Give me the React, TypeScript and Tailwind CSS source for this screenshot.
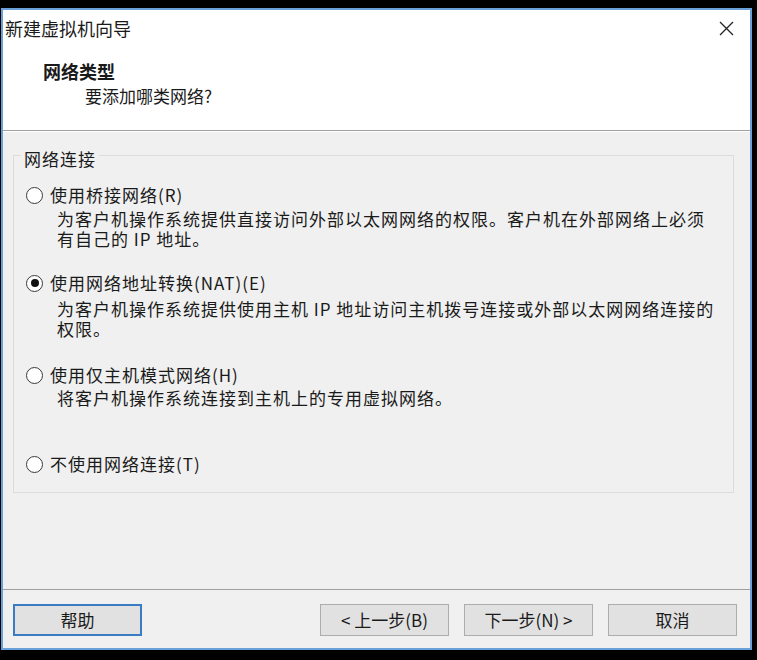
import React from "react"

const FONT = { fontFamily: '"Noto Sans CJK SC", "Noto Sans", sans-serif' }

type OptionProps = {
    label: string
    lines?: string[]
    checked?: boolean
    className?: string
    descClass?: string
}

const Radio = ({ checked }: { checked?: boolean }) => (
    <span className="w-[17px] h-[17px] rounded-full border-[1.5px] border-[#3a3a3a] bg-white flex items-center justify-center shrink-0">
        {checked && <span className="w-[8px] h-[8px] rounded-full bg-[#111]" />}
    </span>
)

const Option = ({ label, lines = [], checked, className = "", descClass = "mt-[4px]" }: OptionProps) => (
    <div className={className}>
        <div className="flex items-center h-[20px] gap-[7px]">
            <Radio checked={checked} />
            <span className="leading-[20px] tracking-[1px] whitespace-nowrap">{label}</span>
        </div>
        {lines.length > 0 && (
            <div className={`pl-[31px] ${descClass}`}>
                {lines.map((l) => (
                    <div key={l} className="leading-[20px] tracking-[1px] whitespace-nowrap">{l}</div>
                ))}
            </div>
        )}
    </div>
)

const Button = ({ children, primary }: { children: React.ReactNode, primary?: boolean }) => (
    <button
        className={`h-[32px] bg-[#e1e1e1] text-[17px] text-[#1a1a1a] flex items-center justify-center ${
            primary ? "w-[129px] border-2 border-[#3b7bc4]" : "w-[129px] border border-[#adadad]"
        }`}
    >
        {children}
    </button>
)

export default function App() {
    return (
        <div className="w-[757px] h-[660px] bg-black pt-[8px] pl-[1px]" style={FONT}>
            <div className="w-[751px] h-[642px] border-2 border-[#6aa0d8] flex flex-col text-[#1a1a1a]">
                {/* title bar */}
                <div className="h-[36px] bg-white flex items-center justify-between pl-[2px] pr-[16px]">
                    <span className="text-[18px] leading-[24px]">新建虚拟机向导</span>
                    <svg width="15" height="15" viewBox="0 0 15 15" className="mt-[1px]">
                        <path d="M1 1 L14 14 M14 1 L1 14" stroke="#222" strokeWidth="1.3" />
                    </svg>
                </div>

                {/* header */}
                <div className="h-[84px] bg-white pt-[13px]">
                    <div className="pl-[40px] text-[18px] leading-[24px] font-bold">网络类型</div>
                    <div className="pl-[82px] text-[17px] leading-[24px] mt-[1px]">要添加哪类网络?</div>
                </div>
                <div className="h-px bg-[#a0a0a0]" />
                <div className="h-px bg-white" />

                {/* body */}
                <div className="flex-1 bg-[#f0f0f0] pt-[9px] text-[17px]">
                    <fieldset className="ml-[10px] w-[721px] border border-[#dcdcdc] pl-[12px] pb-[18px]">
                        <legend className="-ml-[5px] px-[3px] pt-[8px] leading-[20px] tracking-[1px]">网络连接</legend>
                        <Option
                            className="mt-[16px]"
                            label="使用桥接网络(R)"
                            lines={[
                                "为客户机操作系统提供直接访问外部以太网网络的权限。客户机在外部网络上必须",
                                "有自己的 IP 地址。",
                            ]}
                        />
                        <Option
                            className="mt-[24px]"
                            checked
                            descClass="mt-[6px]"
                            label="使用网络地址转换(NAT)(E)"
                            lines={[
                                "为客户机操作系统提供使用主机 IP 地址访问主机拨号连接或外部以太网网络连接的",
                                "权限。",
                            ]}
                        />
                        <Option
                            className="mt-[26px]"
                            descClass="mt-[3px]"
                            label="使用仅主机模式网络(H)"
                            lines={["将客户机操作系统连接到主机上的专用虚拟网络。"]}
                        />
                        <Option className="mt-[46px]" label="不使用网络连接(T)" />
                    </fieldset>
                </div>

                {/* footer */}
                <div className="h-px bg-[#a0a0a0]" />
                <div className="h-[58px] bg-[#f0f0f0] pt-[14px] pl-[10px] pr-[13px] flex items-start">
                    <Button primary>帮助</Button>
                    <div className="flex-1" />
                    <div className="flex gap-[15px]">
                        <Button>&lt; 上一步(B)</Button>
                        <Button>下一步(N) &gt;</Button>
                        <Button>取消</Button>
                    </div>
                </div>
            </div>
        </div>
    )
}
